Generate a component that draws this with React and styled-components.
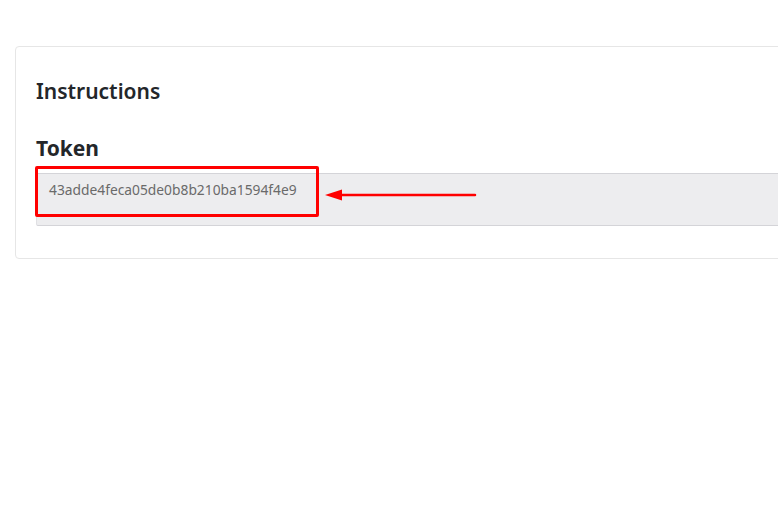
import React from "react";
import styled, { createGlobalStyle } from "styled-components";

const GlobalStyle = createGlobalStyle`
  html, body {
    margin: 0;
    padding: 0;
    background: #ffffff;
    overflow: hidden;
  }
  body {
    font-family: "Noto Sans", "Open Sans", sans-serif;
    color: #212529;
  }
`;

const Page = styled.div`
  width: 778px;
  height: 514px;
  padding: 46px 0 0 15px;
  box-sizing: border-box;
  overflow: hidden;
`;

const Card = styled.section`
  width: 900px;
  height: 213px;
  box-sizing: border-box;
  border: 1px solid #e6e6e6;
  border-radius: 4px;
  padding: 26px 20px 0 20px;
`;

const Heading = styled.h2`
  margin: 0;
  font-size: 21px;
  font-weight: 600;
  line-height: 36px;
  color: #23262a;
`;

const Label = styled.h3`
  margin: 24px 0 10px 0;
  font-size: 21px;
  font-weight: 700;
  line-height: 30px;
  color: #23262a;
`;

const Field = styled.div`
  position: relative;
`;

const TokenBox = styled.div`
  height: 53px;
  box-sizing: border-box;
  background: #ededef;
  border-top: 1px solid #d4d4d8;
  border-bottom: 1px solid #d4d4d8;
  border-left: 1px solid #e0e0e3;
  border-radius: 2px;
  padding: 6px 12px 0 12px;
  font-size: 13.8px;
  line-height: 20px;
  color: #6a6a6a;
`;

const Highlight = styled.div`
  position: absolute;
  left: -1px;
  top: -7px;
  width: 284px;
  height: 51px;
  box-sizing: border-box;
  border: 3px solid #ff0000;
  border-radius: 2px;
  pointer-events: none;
`;

const Arrow = styled.svg`
  position: absolute;
  left: 289px;
  top: 15px;
`;

export default function App() {
  return (
    <>
      <GlobalStyle />
      <Page>
        <Card>
          <Heading>Instructions</Heading>
          <Label>Token</Label>
          <Field>
            <TokenBox>43adde4feca05de0b8b210ba1594f4e9</TokenBox>
            <Highlight />
            <Arrow width="152" height="14" viewBox="0 0 152 14">
              <line x1="14" y1="7" x2="150" y2="7" stroke="#ff0000" strokeWidth="2.5" strokeLinecap="round" />
              <polygon points="0,7 17,1.5 17,12.5" fill="#ff0000" />
            </Arrow>
          </Field>
        </Card>
      </Page>
    </>
  );
}
